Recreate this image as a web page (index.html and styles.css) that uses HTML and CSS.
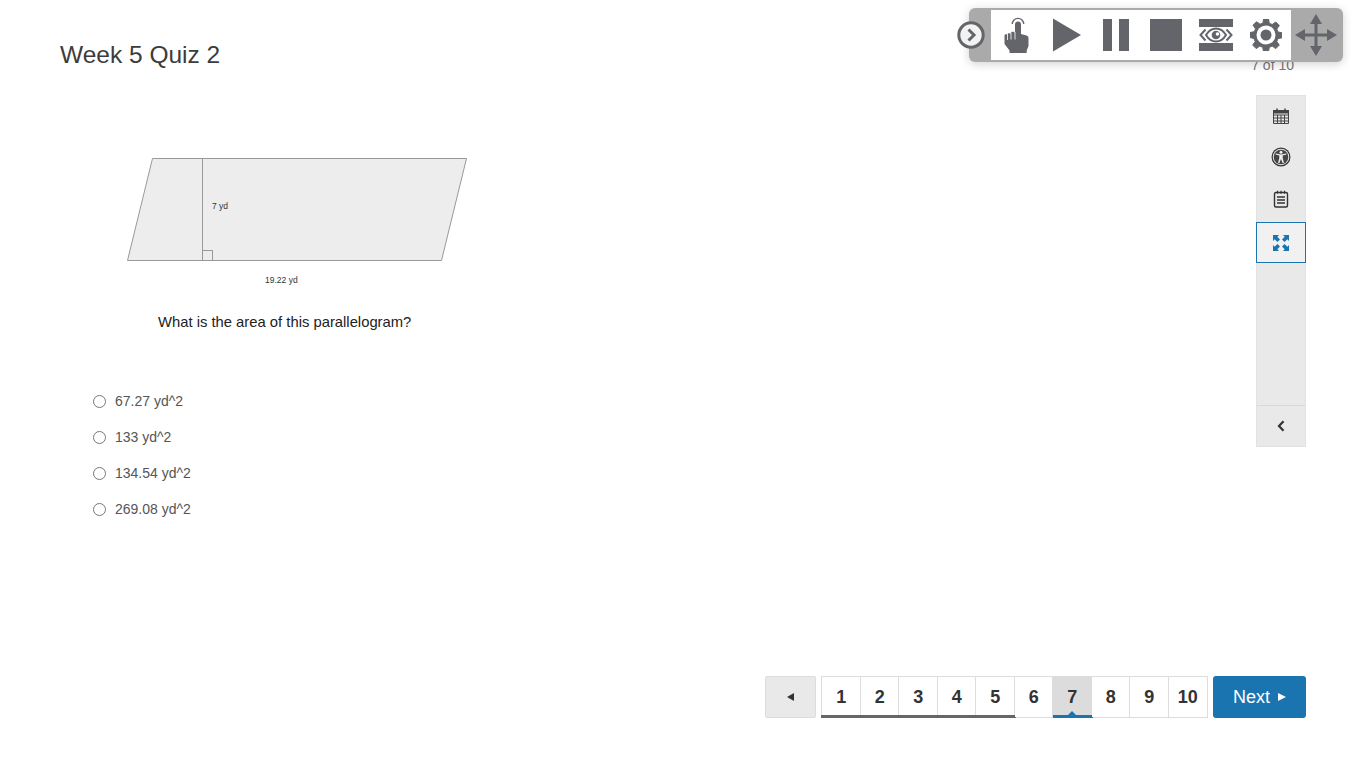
FILE: index.html
```html
<!DOCTYPE html>
<html lang="en">
<head>
<meta charset="utf-8">
<title>Week 5 Quiz 2</title>
<link rel="stylesheet" href="styles.css">
</head>
<body>
<div class="page">
  <header class="head">
    <h1 class="title">Week 5 Quiz 2</h1>
    <div class="count">7 of 10</div>
  </header>
  <div class="main">
    <section class="quiz">
      <figure class="figure">
        <svg class="diagram" width="370" height="150" viewBox="0 0 370 150">
          <polygon class="shape" points="42.5,13.5 356.5,13.5 331.5,115.5 17.5,115.5"/>
          <line class="edge" x1="92.5" y1="13.5" x2="92.5" y2="115.5"/>
          <rect class="edge-box" x="92.5" y="105.5" width="10" height="10"/>
          <text class="dim" x="102" y="64">7 yd</text>
          <text class="dim" x="155" y="138">19.22 yd</text>
        </svg>
      </figure>
      <p class="question">What is the area of this parallelogram?</p>
      <ul class="answers">
        <li class="answer"><span class="radio"></span>67.27 yd^2</li>
        <li class="answer"><span class="radio"></span>133 yd^2</li>
        <li class="answer"><span class="radio"></span>134.54 yd^2</li>
        <li class="answer"><span class="radio"></span>269.08 yd^2</li>
      </ul>
    </section>
    <aside class="tools">
      <div class="tool tool-cal">
        <svg width="18" height="18" viewBox="0 0 18 18"><path d="M1.500 4.500h15v12h-15zM1.500 8h15M1.500 11h15M1.500 14h15M5.500 8v8.500M9 8v8.500M12.500 8v8.500" fill="none" stroke="#444" stroke-width="1"/><path d="M1 3h16v3.500H1z" fill="#444"/><path d="M5 1.500v2M13 1.500v2" stroke="#444" stroke-width="1.500"/></svg>
      </div>
      <div class="tool tool-a11y">
        <svg width="20" height="20" viewBox="0 0 20 20"><circle cx="10" cy="10" r="9.500" fill="#333"/><circle cx="10" cy="10" r="8.300" fill="#e8e8e8"/><circle cx="10" cy="10" r="7.300" fill="#444"/><circle cx="10" cy="5.200" r="1.500" fill="#eee"/><path d="M4.500 7.400 8.300 8.400V11L7 16h1.400L10 12l1.600 4H13l-1.300-5V8.400l3.800-1-.3-1L10 7.500 4.800 6.400z" fill="#eee"/></svg>
      </div>
      <div class="tool tool-note">
        <svg width="18" height="18" viewBox="0 0 18 18"><rect x="2.500" y="2.500" width="13" height="14.500" rx="1.500" fill="none" stroke="#333" stroke-width="1.400"/><path d="M5 7h8M5 10h8M5 13h8" stroke="#333" stroke-width="1.300"/><path d="M5.500 .8v3M9 .8v3M12.500 .8v3" stroke="#333" stroke-width="1.200"/></svg>
      </div>
      <div class="tool tool-active">
        <svg width="16" height="16" viewBox="0 0 16 16" fill="#1a74b0"><path d="M0 0h6L4.300 1.700 7 4.400 4.400 7 1.700 4.300 0 6zM16 0v6l-1.700-1.700L11.600 7 9 4.400l2.700-2.700L10 0zM0 16v-6l1.700 1.700L4.400 9 7 11.600l-2.700 2.700L6 16zM16 16h-6l1.700-1.700L9 11.600 11.600 9l2.700 2.700L16 10z"/></svg>
      </div>
      <div class="tool-fill"></div>
      <div class="tool-collapse">
        <svg width="8" height="12" viewBox="0 0 8 12"><path d="M6.500 1.200 2 6l4.500 4.800" fill="none" stroke="#333" stroke-width="2.200"/></svg>
      </div>
    </aside>
  </div>
  <nav class="pager">
    <div class="prev"><span class="tri-left"></span></div>
    <ol class="pages">
      <li class="num done">1</li>
      <li class="num done">2</li>
      <li class="num done">3</li>
      <li class="num done">4</li>
      <li class="num done">5</li>
      <li class="num">6</li>
      <li class="num current">7</li>
      <li class="num">8</li>
      <li class="num">9</li>
      <li class="num">10</li>
    </ol>
    <div class="next">Next<span class="tri-right"></span></div>
  </nav>
</div>
<div class="reader">
  <div class="reader-icons">
    <span class="cell">
      <svg width="26" height="37" viewBox="0 0 26 37"><path d="M9.300 7a5.700 5.700 0 0 1 11.400 0" fill="none" stroke="#63656a" stroke-width="1.300"/><path d="M12 7.500a3 3 0 0 1 6 0V17l5.500 1.500c1.300.4 2 1.300 2 2.700V29l-1.800 4.500V36H6.500v-2.500L1.500 27V18.500c0-1.800 3-1.800 3 0v-1c0-1.800 3.200-1.800 3.200 0V16c0-1.700 4.300-1.700 4.300 0z" fill="#63656a"/><path d="M4.500 17v6M8 15.500v7M12 15v7.500" fill="none" stroke="#fff" stroke-width=".8"/></svg>
    </span>
    <span class="cell">
      <svg width="30" height="34" viewBox="0 0 30 34"><path d="M2 0.500 30 17 2 33.500z" fill="#63656a"/></svg>
    </span>
    <span class="cell">
      <svg width="26" height="32" viewBox="0 0 26 32"><path d="M0 0h9v32H0zM16 0h10v32H16z" fill="#63656a"/></svg>
    </span>
    <span class="cell"><span class="stop"></span></span>
    <span class="cell">
      <svg width="34" height="32" viewBox="0 0 34 32"><path d="M0 0h34v8H0zM0 24h34v8H0z" fill="#63656a"/><path d="M6.500 10.500 1.500 16l5 5.500M27.500 10.500 32.500 16l-5 5.500" fill="none" stroke="#63656a" stroke-width="2"/><path d="M7 16c3-5 6.500-6.500 10-6.500S24 11 27 16c-3 5-6.500 6.500-10 6.500S10 21 7 16z" fill="none" stroke="#63656a" stroke-width="2"/><circle cx="17" cy="16" r="4.300" fill="#63656a"/><circle cx="18.500" cy="15" r="1.800" fill="#fff"/></svg>
    </span>
    <span class="cell">
      <svg width="32" height="32" viewBox="0 0 32 32"><path d="M13.500 0h5l.8 4.300 2.900 1.200 3.600-2.500 3.500 3.500-2.500 3.600 1.200 2.900 4.300.8v5l-4.300.8-1.200 2.900 2.500 3.600-3.500 3.500-3.600-2.500-2.900 1.200-.8 4.300h-5l-.8-4.300-2.900-1.200-3.600 2.500-3.500-3.500 2.500-3.600-1.200-2.900L0 18.500v-5l4.300-.8 1.200-2.900L3 6.200 6.500 2.700l3.600 2.500 2.900-1.200z" fill="#63656a" stroke="#63656a" stroke-width="1" stroke-linejoin="round"/><circle cx="16" cy="16" r="9.500" fill="#fff"/><circle cx="16" cy="16" r="5.500" fill="#63656a"/></svg>
    </span>
  </div>
  <span class="mover">
    <svg width="42" height="42" viewBox="0 0 42 42"><path d="M21 0 27 10H22.500V19.500H32V15L42 21 32 27V22.500H22.500V32H27L21 42 15 32H19.500V22.500H10V27L0 21 10 15V19.500H19.500V10H15z" fill="#63656a"/></svg>
  </span>
  <span class="collapse-btn">
    <svg width="28" height="28" viewBox="0 0 28 28"><circle cx="14" cy="14" r="12.200" fill="#f2f2f2" stroke="#63656a" stroke-width="3"/><path d="M11.500 8.500 17 14l-5.500 5.500" fill="none" stroke="#63656a" stroke-width="3"/></svg>
  </span>
</div>
</body>
</html>
```
FILE: styles.css
```css
* { box-sizing: border-box; }
html, body { margin: 0; padding: 0; background: #fff; }
body { font-family: "Liberation Sans", Arial, sans-serif; color: #333; overflow: hidden; }

.page { width: 1366px; height: 768px; padding: 0 60px; display: flex; flex-direction: column; }

.head { height: 95px; display: flex; justify-content: space-between; align-items: flex-start; }
.title { margin: 41px 0 0; font-size: 24.500px; line-height: 28px; font-weight: 400; color: #3c3c3c; }
.count { margin: 57px 12px 0 0; font-size: 14px; line-height: 16px; color: #777; }

.main { height: 581px; display: flex; justify-content: space-between; align-items: flex-start; }
.quiz { width: 600px; }
.figure { margin: 50px 0 0 50px; height: 150px; }
.diagram { display: block; }
.shape { fill: #ededed; stroke: #999; stroke-width: 1; }
.edge { stroke: #999; stroke-width: 1; }
.edge-box { fill: none; stroke: #999; stroke-width: 1; }
.dim { font-family: "Liberation Sans", Arial, sans-serif; font-size: 8.500px; fill: #333; }

.question { margin: 17px 0 0 98px; font-size: 14.800px; line-height: 20px; color: #222; }

.answers { list-style: none; margin: 51px 0 0 33px; padding: 0; }
.answer { height: 36px; display: flex; align-items: center; font-size: 14px; color: #555; }
.radio { width: 13px; height: 13px; margin-right: 9px; border: 1px solid #767676; border-radius: 50%; background: #fff; }

.tools { width: 50px; height: 352px; display: flex; flex-direction: column; align-items: stretch; background: #e9e9e9; border: 1px solid #e2e2e2; }
.tool { height: 41px; display: flex; align-items: center; justify-content: center; }
.tool-cal { height: 40px; }
.tool-a11y { height: 42px; }
.tool-note { height: 44px; padding-bottom: 2px; }
.tool-active { width: 50px; height: 41px; margin-left: -1px; background: #f1f1f1; border: 1px solid #1a74b0; }
.tool-fill { flex: 1; }
.tool-collapse { height: 41px; display: flex; align-items: center; justify-content: center; border-top: 1px solid #d8d8d8; }

.pager { height: 42px; display: flex; justify-content: flex-end; }
.prev { width: 51px; height: 42px; margin-right: 5px; display: flex; align-items: center; justify-content: center; background: #e9e9e9; border: 1px solid #dcdcdc; border-radius: 2px; }
.tri-left { width: 0; height: 0; border-style: solid; border-width: 4px 7px 4px 0; border-color: transparent #333 transparent transparent; }
.pages { list-style: none; width: 387px; height: 42px; margin: 0 5px 0 0; padding: 0; display: flex; border: 1px solid #ddd; }
.num { position: relative; flex: 0 0 38.500px; display: flex; align-items: center; justify-content: center; padding-left: 1px; font-size: 18px; font-weight: 700; color: #333; border-right: 1px solid #ddd; background: #fff; }
.num:last-child { border-right: 0; padding-left: 0; }
.done::after { content: ""; position: absolute; left: -1px; right: -2px; bottom: -1px; height: 3px; background: #666; }
.current { background: #dcdcdc; border-right: 0; padding-left: 0; }
.current::before { content: ""; position: absolute; left: 0; right: -1px; bottom: -1px; height: 3px; background: #1a74b0; }
.current::after { content: ""; position: absolute; left: 50%; bottom: 2px; margin-left: -4px; border-style: solid; border-width: 0 4px 4px; border-color: transparent transparent #1a74b0; }
.next { width: 93px; height: 42px; display: flex; align-items: center; justify-content: center; gap: 8px; font-size: 18px; color: #fff; background: #1a74b0; border-radius: 3px; }
.tri-right { width: 0; height: 0; border-style: solid; border-width: 4px 0 4px 8px; border-color: transparent transparent transparent #fff; }

.reader { position: absolute; left: 969px; top: 8px; width: 374px; height: 54px; display: flex; padding: 2px 0; background: #aaaaaa; border-radius: 6px; box-shadow: 0 2px 10px rgba(0, 0, 0, .18); }
.reader-icons { width: 300px; height: 50px; margin-left: 22px; display: flex; background: #fff; }
.cell { width: 50px; height: 50px; display: flex; align-items: center; justify-content: center; }
.stop { width: 32px; height: 32px; background: #63656a; }
.mover { width: 50px; height: 50px; display: flex; align-items: center; justify-content: center; }
.collapse-btn { position: absolute; left: -12px; top: 13px; width: 28px; height: 28px; }
.collapse-btn svg, .mover svg, .cell svg { display: block; }
```
